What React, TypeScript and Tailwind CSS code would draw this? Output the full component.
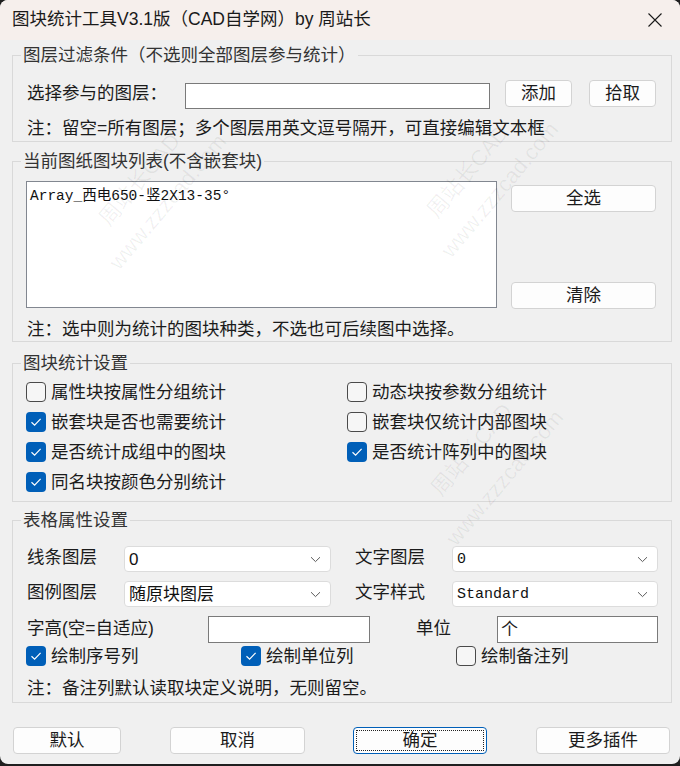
import React from "react";

const ChevronDown = () => (
  <svg width="11" height="7" viewBox="0 0 11 7" className="shrink-0">
    <path d="M1 1.2 L5.5 5.6 L10 1.2" fill="none" stroke="#5a5a5a" strokeWidth="1" />
  </svg>
);

function Checkbox({ checked, label }: { checked?: boolean; label: string }) {
  return (
    <div className="flex items-center h-[30px]">
      {checked ? (
        <span className="w-[20px] h-[20px] shrink-0 rounded-[4px] bg-[#005fb8] flex items-center justify-center">
          <svg width="12" height="10" viewBox="0 0 12 10">
            <path d="M1.5 5.2 L4.6 8.2 L10.6 1.8" fill="none" stroke="#ffffff" strokeWidth="1.2" />
          </svg>
        </span>
      ) : (
        <span className="w-[20px] h-[20px] shrink-0 rounded-[4px] border border-[#4a4a4a] bg-[#f6f6f6]" />
      )}
      <span className="ml-[5px] text-[17.5px] leading-[22px] text-[#1b1b1b]">{label}</span>
    </div>
  );
}

function Btn({ label, className }: { label: string; className: string }) {
  return (
    <button
      className={
        "h-[27px] shrink-0 bg-[#fdfdfd] border border-[#d3d3d3] rounded-[4px] text-[17.5px] leading-none text-[#1b1b1b] flex items-center justify-center " +
        className
      }
    >
      {label}
    </button>
  );
}

function Combo({ value, mono, className }: { value: string; mono?: boolean; className: string }) {
  return (
    <div
      className={
        "h-[26px] shrink-0 bg-white border border-[#dcdcdc] rounded-[4px] flex items-center justify-between pl-[4px] pr-[9px] " +
        className
      }
    >
      <span
        className={
          mono
            ? "font-['Liberation_Mono','Noto_Sans_CJK_SC',monospace] text-[15px] leading-none text-[#111]"
            : "text-[17px] leading-none text-[#111]"
        }
      >
        {value}
      </span>
      <ChevronDown />
    </div>
  );
}

function Group({ title, className, children }: { title: string; className: string; children: React.ReactNode }) {
  return (
    <fieldset className={"border border-[#d9d9d9] p-0 m-0 " + className}>
      <legend className="ml-[8px] px-[2px] text-[17.5px] leading-[22px] text-[#333]">{title}</legend>
      <div className="pl-[13px]">{children}</div>
    </fieldset>
  );
}

// faint diagonal watermark; left/top give the centre of the text
const Watermark = ({ text, className }: { text: string; className: string }) => (
  <div
    className={
      "absolute pointer-events-none -translate-x-1/2 -translate-y-1/2 -rotate-[50deg] text-[22px] leading-none font-['Liberation_Sans','Noto_Sans_CJK_SC',sans-serif] text-black/[0.06] whitespace-nowrap " +
      className
    }
  >
    {text}
  </div>
);

export default function App() {
  return (
    <div className="w-[680px] h-[766px] bg-[#1f1f1f] font-['Liberation_Sans','Noto_Sans_CJK_SC',sans-serif]">
      <div className="relative w-[680px] h-[764px] bg-[#f0f0f0] rounded-[8px] overflow-hidden">
        {/* title bar */}
        <div className="h-[40px] bg-[#f6efec] flex items-center justify-between pl-[12px] pr-[18px]">
          <span className="text-[17.5px] text-[#1a1a1a] leading-none">图块统计工具V3.1版（CAD自学网）by 周站长</span>
          <svg width="14" height="14" viewBox="0 0 14 14">
            <path d="M0.5 0.5 L13.5 13.5 M13.5 0.5 L0.5 13.5" stroke="#1a1a1a" strokeWidth="1.1" />
          </svg>
        </div>

        <div className="pl-[12px] pr-[8px]">
          <Group title="图层过滤条件（不选则全部图层参与统计）" className="mt-[4px] h-[98px]">
            <div className="mt-[14px] flex items-start h-[29px]">
              <span className="w-[159px] pl-[1px] shrink-0 text-[17.5px] leading-[26px] text-[#1b1b1b]">选择参与的图层：</span>
              <div className="w-[305px] h-[26px] mt-[3px] shrink-0 bg-white border border-[#7a7a7a]" />
              <Btn label="添加" className="ml-[15px] w-[67px]" />
              <Btn label="拾取" className="ml-[17px] w-[67px]" />
            </div>
            <div className="mt-[8px] pl-[1px] text-[17.5px] leading-[22px] text-[#1b1b1b] whitespace-nowrap">
              注：留空=所有图层；多个图层用英文逗号隔开，可直接编辑文本框
            </div>
          </Group>

          <Group title="当前图纸图块列表(不含嵌套块)" className="mt-[8px] h-[192px]">
            <div className="mt-[9px] flex items-start">
              <div className="w-[471px] h-[127px] shrink-0 bg-white border border-[#828790] pl-[3px] pt-[1px]">
                <span className="font-['Liberation_Mono','Noto_Sans_CJK_SC',monospace] text-[14.5px] leading-[20px] text-[#111]">
                  Array_西电650-竖2X13-35°
                </span>
              </div>
              <div className="ml-[14px] flex flex-col">
                <Btn label="全选" className="mt-[4px] w-[145px]" />
                <Btn label="清除" className="mt-[70px] w-[145px]" />
              </div>
            </div>
            <div className="mt-[9px] pl-[1px] text-[17.5px] leading-[22px] text-[#1b1b1b] whitespace-nowrap">
              注：选中则为统计的图块种类，不选也可后续图中选择。
            </div>
          </Group>

          <Group title="图块统计设置" className="mt-[10px] h-[150px]">
            <div className="mt-[3px] grid grid-cols-[321px_1fr]">
              <Checkbox label="属性块按属性分组统计" />
              <Checkbox label="动态块按参数分组统计" />
              <Checkbox checked label="嵌套块是否也需要统计" />
              <Checkbox label="嵌套块仅统计内部图块" />
              <Checkbox checked label="是否统计成组中的图块" />
              <Checkbox checked label="是否统计阵列中的图块" />
              <Checkbox checked label="同名块按颜色分别统计" />
            </div>
          </Group>

          <Group title="表格属性设置" className="mt-[7px] h-[194px]">
            <div className="mt-[15px] flex items-center h-[26px] text-[17.5px] text-[#1b1b1b]">
              <span className="w-[98px] pl-[1px] shrink-0 leading-[22px] -mt-[4px]">线条图层</span>
              <Combo value="0" className="w-[207px]" />
              <span className="w-[121px] pl-[24px] shrink-0 leading-[22px] -mt-[4px]">文字图层</span>
              <Combo value="0" mono className="w-[206px]" />
            </div>
            <div className="mt-[9px] flex items-center h-[26px] text-[17.5px] text-[#1b1b1b]">
              <span className="w-[98px] pl-[1px] shrink-0 leading-[22px] -mt-[4px]">图例图层</span>
              <Combo value="随原块图层" className="w-[207px]" />
              <span className="w-[121px] pl-[24px] shrink-0 leading-[22px] -mt-[4px]">文字样式</span>
              <Combo value="Standard" mono className="w-[206px]" />
            </div>
            <div className="mt-[9px] flex items-center h-[27px] text-[17.5px] text-[#1b1b1b]">
              <span className="w-[182px] pl-[1px] shrink-0 leading-[22px] -mt-[3px]">字高(空=自适应)</span>
              <div className="w-[162px] h-[27px] shrink-0 bg-white border border-[#7a7a7a]" />
              <span className="w-[127px] pl-[46px] shrink-0 leading-[22px] -mt-[3px]">单位</span>
              <div className="w-[161px] h-[27px] shrink-0 bg-white border border-[#7a7a7a] pl-[3px] flex items-center">
                <span className="text-[17px] leading-none">个</span>
              </div>
            </div>
            <div className="flex h-[26px] items-center">
              <div className="w-[215px] shrink-0">
                <Checkbox checked label="绘制序号列" />
              </div>
              <div className="w-[215px] shrink-0">
                <Checkbox checked label="绘制单位列" />
              </div>
              <div className="w-[200px] shrink-0">
                <Checkbox label="绘制备注列" />
              </div>
            </div>
            <div className="mt-[8px] pl-[1px] text-[17.5px] leading-[22px] text-[#1b1b1b] whitespace-nowrap">
              注：备注列默认读取块定义说明，无则留空。
            </div>
          </Group>

          <div className="mt-[24px] flex items-start">
            <Btn label="默认" className="ml-[1px] w-[108px]" />
            <Btn label="取消" className="ml-[49px] w-[135px]" />
            <button className="ml-[48px] w-[134px] h-[27px] shrink-0 bg-[#fdfdfd] border border-[#005fb8] rounded-[4px] p-[2px]">
              <span className="w-full h-full border border-dotted border-[#222] flex items-center justify-center text-[17.5px] leading-none text-[#1b1b1b]">
                确定
              </span>
            </button>
            <Btn label="更多插件" className="ml-[49px] w-[134px]" />
          </div>
        </div>

        <Watermark text="周站长CAD" className="left-[140px] top-[180px]" />
        <Watermark text="www.zzzcad.com" className="left-[168px] top-[202px]" />
        <Watermark text="周站长CAD" className="left-[468px] top-[172px]" />
        <Watermark text="www.zzzcad.com" className="left-[500px] top-[190px]" />
        <Watermark text="周站长CAD" className="left-[472px] top-[450px]" />
        <Watermark text="www.zzzcad.com" className="left-[505px] top-[478px]" />
      </div>
    </div>
  );
}
